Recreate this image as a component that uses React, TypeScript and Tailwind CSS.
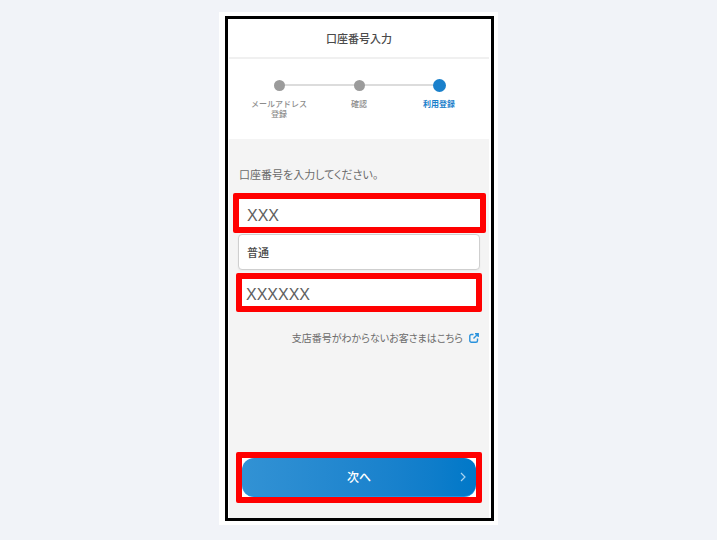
import { useState } from "react";

type Step = {
  lines: string[];
  active: boolean;
};

const steps: Step[] = [
  { lines: ["メールアドレス", "登録"], active: false },
  { lines: ["確認"], active: false },
  { lines: ["利用登録"], active: true },
];

function StepDot({ step }: { step: Step }) {
  return (
    <li className="relative z-10 flex w-20 flex-col items-center">
      <span className="flex h-4 items-center">
        <span
          className={
            step.active
              ? "size-[13px] rounded-full bg-[#1a80cb]"
              : "size-[11px] rounded-full bg-[#9b9b9b]"
          }
        />
      </span>
      <span
        className={
          step.active
            ? "mt-1.5 text-center text-[8px] leading-[10px] font-bold text-[#1a80cb]"
            : "mt-1.5 text-center text-[8px] leading-[10px] font-medium text-[#8c8c8c]"
        }
      >
        {step.lines.map((line) => (
          <span key={line} className="block whitespace-nowrap">
            {line}
          </span>
        ))}
      </span>
    </li>
  );
}

function Stepper() {
  return (
    <ol className="relative flex justify-center bg-white pt-[18px] pb-5">
      <span className="absolute top-[25px] left-1/2 h-0.5 w-40 -translate-x-1/2 bg-[#dcdcdc]" />
      {steps.map((step) => (
        <StepDot key={step.lines[0]} step={step} />
      ))}
    </ol>
  );
}

export default function App() {
  const [branch, setBranch] = useState("XXX");
  const [account, setAccount] = useState("XXXXXX");

  return (
    <div className="flex min-h-screen items-start justify-center bg-[#f1f3f8] pt-3 font-['Noto_Sans_CJK_JP','Noto_Sans',sans-serif]">
      <div className="w-full max-w-[279px] bg-white py-1 pr-1 pl-1.5">
        <main className="border-3 border-black pr-0.5 pl-px">
          <header className="border-b-2 border-[#f0f0f0] bg-white py-[9px] text-center">
            <h1 className="text-[11px] leading-5 font-medium text-[#4a4a4a]">
              口座番号入力
            </h1>
          </header>

          <Stepper />

          <form
            className="flex flex-col bg-[#f4f4f4] px-[7px] pt-[27px] pb-[15px]"
            onSubmit={(e) => e.preventDefault()}
          >
            <p className="px-[3px] text-[11px] leading-4 text-[#6b6b6b] [font-feature-settings:'palt']">
              口座番号を入力してください。
            </p>

            <input
              aria-label="支店番号"
              className="mt-[11px] -mr-1 -ml-[3px] h-10 rounded-xs border-6 border-[#ff0000] bg-white px-2 pt-1.5 font-['Liberation_Sans',sans-serif] text-base text-[#606060] outline-none"
              value={branch}
              onChange={(e) => setBranch(e.target.value)}
            />
            <select
              aria-label="預金種別"
              className="mt-px mr-0.5 ml-0.5 h-9 appearance-none rounded-sm border border-[#cfcfcf] bg-white px-2 text-[11px] font-medium text-[#4a4a4a] shadow-xs outline-none"
            >
              <option>普通</option>
            </select>
            <input
              aria-label="口座番号"
              className="mt-[3px] h-[39px] rounded-xs border-6 border-[#ff0000] bg-white px-1 pt-1 font-['Liberation_Sans',sans-serif] text-base text-[#606060] outline-none"
              value={account}
              onChange={(e) => setAccount(e.target.value)}
            />

            <a
              href="#"
              className="mt-4 mr-[3px] flex items-center justify-end gap-1.5 text-[10px] leading-5 text-[#6b6b6b] [font-feature-settings:'palt']"
            >
              支店番号がわからないお客さまはこちら
              <svg
                viewBox="0 0 10 10"
                className="size-2.5 text-[#2a92dc]"
                fill="none"
                stroke="currentColor"
                strokeWidth="1.4"
              >
                <path d="M4.5 1.5H2.3A1.5 1.5 0 0 0 .8 3V7.7A1.5 1.5 0 0 0 2.3 9.2H7A1.5 1.5 0 0 0 8.5 7.7V5.5" />
                <path d="M6 .8H9.2V4M9.2 .8L4.5 5.5" />
              </svg>
            </a>

            <div className="mt-[104px] rounded-xs border-6 border-[#ff0000] bg-white">
              <button
                type="submit"
                className="relative block h-[39px] w-full rounded-xl border-b border-[#1c94e4] bg-linear-to-r from-[#3292d4] to-[#0078c8] text-xs font-medium text-white"
              >
                次へ
                <svg
                  viewBox="0 0 6 10"
                  className="absolute top-1/2 right-2.5 h-2.5 w-1.5 -translate-y-1/2"
                  fill="none"
                  stroke="#a9d4f0"
                  strokeWidth="1.2"
                >
                  <path d="M1 1L5 5L1 9" />
                </svg>
              </button>
            </div>
          </form>
        </main>
      </div>
    </div>
  );
}
